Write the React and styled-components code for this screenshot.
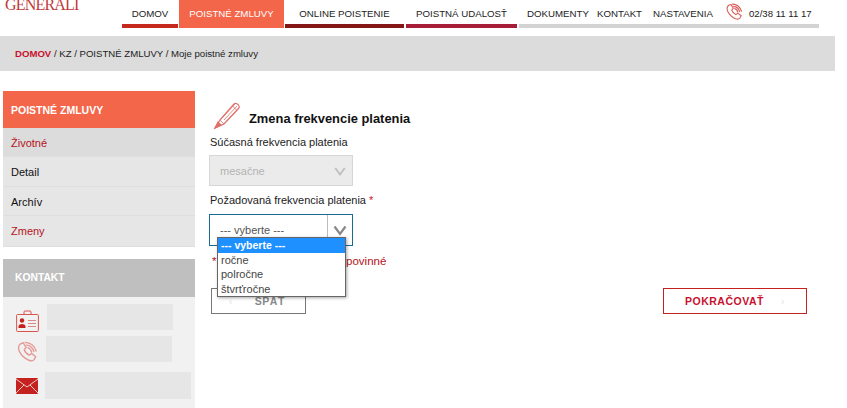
import React from 'react';
import styled, { createGlobalStyle } from 'styled-components';

const GlobalStyle = createGlobalStyle`
  html, body { margin: 0; padding: 0; background: #fff; overflow: hidden; }
  body { font-family: "Liberation Sans", Arial, sans-serif; font-size: 12px; color: #111; }
  * { box-sizing: border-box; }
`;

const Page = styled.div`
  width: 847px;
  height: 408px;
  overflow: hidden;
`;

// Header
const Header = styled.header`
  display: flex;
  height: 36px;
  padding-left: 5px;
`;

const Logo = styled.div`
  width: 117px;
  height: 12px;
  overflow: hidden;
  font-family: "Liberation Serif", serif;
  font-size: 16px;
  line-height: 10px;
  letter-spacing: -0.8px;
  color: #c0373a;
`;

const Nav = styled.nav`
  display: flex;
  align-items: flex-start;
  gap: 1px;
`;

const Tab = styled.a`
  display: block;
  width: ${p => p.$w}px;
  height: 28px;
  margin-right: ${p => p.$mr || 0}px;
  padding-top: 7px;
  text-align: center;
  font-size: 9.7px;
  line-height: 14px;
  white-space: nowrap;
  color: ${p => (p.$active ? '#fff' : '#222')};
  background: ${p => (p.$active ? '#f4664a' : 'transparent')};
  border-bottom: 4px solid ${p => p.$line};
`;

const TabGroup = styled.div`
  display: flex;
  align-items: flex-start;
  width: 300px;
  height: 28px;
  margin-left: 1px;
  padding: 7px 0 0 8px;
  border-bottom: 4px solid #d3d3d3;
`;

const GroupLink = styled.a`
  width: ${p => p.$w}px;
  font-size: 9.7px;
  line-height: 14px;
  white-space: nowrap;
  color: #222;
`;

const HeaderIcon = styled.span`
  display: flex;
  margin-top: -4px;
`;

const PhoneNumber = styled.span`
  margin-left: 6px;
  font-size: 9.6px;
  line-height: 14px;
  white-space: nowrap;
  color: #222;
`;

const Breadcrumb = styled.div`
  width: 835px;
  height: 35px;
  padding: 11px 0 0 15px;
  background: #dcdcdc;
  font-size: 9.6px;
  line-height: 13px;
  color: #222;

  b { color: #c8102e; font-weight: bold; }
`;

// Body
const Content = styled.div`
  display: flex;
  padding: 20px 0 0 3px;
`;

const Sidebar = styled.aside`
  width: 192px;
  flex-shrink: 0;
`;

const SideTitle = styled.div`
  height: 37px;
  padding: 12px 0 0 8px;
  background: #f4664a;
  color: #fff;
  font-size: 10.5px;
  line-height: 14px;
  font-weight: bold;
`;

const SideItem = styled.a`
  display: block;
  height: ${p => p.$h}px;
  padding: 8px 0 0 8px;
  font-size: 11px;
  line-height: 14px;
  color: ${p => (p.$red ? '#b5121b' : '#111')};
  background: ${p => (p.$current ? '#dcdcdc' : '#e6e6e6')};
  border-bottom: 1px solid #dedede;
`;

const ContactTitle = styled.div`
  height: 38px;
  margin-top: 12px;
  padding: 12px 0 0 12px;
  background: #bfbfbf;
  color: #fff;
  font-size: 10.3px;
  line-height: 14px;
  font-weight: bold;
`;

const ContactBody = styled.div`
  height: 120px;
  padding-top: 7px;
  background: #f1f1f1;
`;

const ContactRow = styled.div`
  display: flex;
  align-items: center;
  height: ${p => p.$h}px;
  margin-bottom: ${p => p.$mb}px;
  padding-left: ${p => p.$pl}px;
`;

// icons sit a little below the centre of their row
const ContactIcon = styled.span`
  display: flex;
  margin-top: ${p => p.$mt || 0}px;
`;

const ContactField = styled.div`
  width: ${p => p.$w}px;
  height: 100%;
  margin-left: ${p => p.$ml}px;
  background: #e6e6e6;
`;

const Main = styled.main`
  position: relative;
  flex: 1;
  padding: 5px 0 0 14px;
`;

const TitleRow = styled.div`
  display: flex;
  align-items: flex-end;
  height: 33px;
  padding-left: 4px;
`;

const Title = styled.h2`
  margin: 0 0 2px 8px;
  font-size: 12.9px;
  line-height: 16px;
  font-weight: bold;
  color: #111;
`;

const Label = styled.label`
  display: block;
  margin-top: ${p => p.$mt}px;
  padding-left: 1px;
  font-size: 11px;
  line-height: 14px;
  color: #222;

  i { color: #c8102e; font-style: normal; }
`;

const SelectBox = styled.div`
  position: relative;
  display: flex;
  align-items: center;
  width: 144px;
  height: ${p => (p.$open ? 32 : 31)}px;
  margin-top: ${p => p.$mt}px;
  padding-left: 10px;
  font-size: 11px;
  color: ${p => (p.$open ? '#555' : '#b3b3b3')};
  background: ${p => (p.$open ? '#fff' : '#ebebeb')};
  border: ${p => (p.$open ? '1.5px solid #1a6a94' : '1px solid #d6d6d6')};
`;

const Caret = styled.span`
  position: absolute;
  top: 0;
  right: 0;
  bottom: 0;
  width: 25px;
  display: flex;
  align-items: center;
  justify-content: center;
  border-left: ${p => (p.$open ? '1.5px solid #bcbcbc' : '0')};
`;

const Menu = styled.ul`
  position: absolute;
  top: 146px;
  left: 22px;
  z-index: 2;
  width: 129px;
  margin: 0;
  padding: 0;
  list-style: none;
  background: #fff;
  border: 1px solid #666;
  box-shadow: 1px 1px 3px rgba(0, 0, 0, 0.35);
`;

const MenuItem = styled.li`
  height: 14.5px;
  padding-left: 3px;
  font-size: ${p => (p.$selected ? 10.5 : 11)}px;
  line-height: 14.5px;
  font-weight: ${p => (p.$selected ? 'bold' : 'normal')};
  color: ${p => (p.$selected ? '#fff' : '#444')};
  background: ${p => (p.$selected ? '#1e90ff' : '#fff')};
`;

const Required = styled.p`
  margin: 8px 0 0 3px;
  font-size: 11.5px;
  line-height: 14px;
  color: #b5121b;
`;

const Buttons = styled.div`
  display: flex;
  justify-content: space-between;
  width: 596px;
  margin: 20px 0 0 2px;
`;

const Button = styled.a`
  display: flex;
  align-items: center;
  width: ${p => p.$w}px;
  height: 26px;
  padding-left: ${p => p.$pl}px;
  gap: ${p => p.$gap}px;
  font-size: 10.5px;
  font-weight: bold;
  letter-spacing: 0.5px;
  color: ${p => (p.$primary ? '#c8102e' : '#8a8a8a')};
  border: ${p => (p.$primary ? '1.5px solid #c5221f' : '1px solid #777')};
`;

const Chevron = styled.span`
  font-size: 10px;
  font-weight: normal;
  color: #e2e2e2;
`;

const Pencil = () => (
  <svg width="28" height="28" viewBox="0 0 28 28" fill="none" stroke="#e0706a" strokeWidth="1.2">
    <path d="M7 19 L21 3 Q23 1.5 25.5 4 Q27 6 25.5 7.5 L11 23 L2 27 Z" />
    <path d="M7 19 L11 23 M19.5 5 L23.5 9 M9 17 L22 3 M11 19 L24 5 M13 21 L26 7" strokeWidth="0.8" />
    <path d="M2 27 L5 21 L8 24 Z" fill="#e0706a" />
  </svg>
);

const PhoneWaves = ({ size, color }) => (
  <svg width={size} height={size} viewBox="0 0 24 24" fill="none" stroke={color} strokeWidth="1.5" strokeLinecap="round">
    <path d="M5 3 L8 2 L11 7 L9 9.5 Q10 13 14.5 15.5 L17 13.5 L21.5 17 L20 20 Q18 22.5 14 21 Q7 18 3.5 11 Q1.5 6 5 3 Z" />
    <path d="M10 1.5 Q19 2 22 11 M11.5 4.5 Q17.5 5 19.5 11.5 M13 7.5 Q16 8 17 12" />
  </svg>
);

const IdCard = () => (
  <svg width="23" height="22" viewBox="0 0 23 22" fill="none">
    <rect x="0.6" y="4.5" width="21.8" height="17" rx="1" stroke="#d9534f" strokeWidth="1" />
    <path d="M8 4.5 V2 Q8 1 9 1 H14 Q15 1 15 2 V4.5" stroke="#d9534f" strokeWidth="1" />
    <circle cx="6" cy="10.5" r="2.2" fill="#c5221f" />
    <path d="M2.5 18 V16 Q3 14 6 14 Q9 14 9.5 16 V18 Z" fill="#c5221f" />
    <path d="M12 10.5 H20 M12 13.5 H20 M12 16.5 H20" stroke="#d98a86" strokeWidth="1" />
  </svg>
);

const Envelope = () => (
  <svg width="22" height="16" viewBox="0 0 22 16">
    <rect width="22" height="16" rx="1" fill="#c5221f" />
    <path d="M0 1 L11 9 L22 1 M0 15 L8 7 M22 15 L14 7" stroke="#f1c9c7" strokeWidth="1" fill="none" />
  </svg>
);

const Chev = ({ size, color, width }) => (
  <svg width={size} height={size} viewBox="0 0 14 14" fill="none" stroke={color} strokeWidth={width}>
    <path d="M1.5 3.5 L7 11 L12.5 3.5" />
  </svg>
);

export default function App() {
  return (
    <Page>
      <GlobalStyle />
      <Header>
        <Logo>GENERALI</Logo>
        <Nav>
          <Tab $w={56} $line="#c5281c">DOMOV</Tab>
          <Tab $w={105} $line="#f4664a" $active>POISTNÉ ZMLUVY</Tab>
          <Tab $w={119} $line="#841716" $mr={1}>ONLINE POISTENIE</Tab>
          <Tab $w={111} $line="#a71c36">POISTNÁ UDALOSŤ</Tab>
          <TabGroup>
            <GroupLink $w={70}>DOKUMENTY</GroupLink>
            <GroupLink $w={56}>KONTAKT</GroupLink>
            <GroupLink $w={72}>NASTAVENIA</GroupLink>
            <HeaderIcon><PhoneWaves size={18} color="#d9605c" /></HeaderIcon>
            <PhoneNumber>02/38 11 11 17</PhoneNumber>
          </TabGroup>
        </Nav>
      </Header>
      <Breadcrumb><b>DOMOV</b> / KZ / POISTNÉ ZMLUVY / Moje poistné zmluvy</Breadcrumb>
      <Content>
        <Sidebar>
          <SideTitle>POISTNÉ ZMLUVY</SideTitle>
          <SideItem $h={29} $red $current>Životné</SideItem>
          <SideItem $h={30}>Detail</SideItem>
          <SideItem $h={29}>Archív</SideItem>
          <SideItem $h={31} $red>Zmeny</SideItem>
          <ContactTitle>KONTAKT</ContactTitle>
          <ContactBody>
            <ContactRow $h={26} $mb={6} $pl={13}>
              <ContactIcon $mt={8}><IdCard /></ContactIcon>
              <ContactField $w={126} $ml={8} />
            </ContactRow>
            <ContactRow $h={26} $mb={10} $pl={13}>
              <ContactIcon $mt={6}><PhoneWaves size={22} color="#e59a96" /></ContactIcon>
              <ContactField $w={126} $ml={8} />
            </ContactRow>
            <ContactRow $h={27} $mb={0} $pl={13}>
              <Envelope />
              <ContactField $w={146} $ml={7} />
            </ContactRow>
          </ContactBody>
        </Sidebar>
        <Main>
          <TitleRow>
            <Pencil />
            <Title>Zmena frekvencie platenia</Title>
          </TitleRow>
          <Label $mt={6}>Súčasná frekvencia platenia</Label>
          <SelectBox $mt={6}>
            mesačne
            <Caret><Chev size={12} color="#bdbdbd" width={2} /></Caret>
          </SelectBox>
          <Label $mt={7}>Požadovaná frekvencia platenia <i>*</i></Label>
          <SelectBox $mt={7} $open>
            --- vyberte ---
            <Caret $open><Chev size={14} color="#888" width={2.2} /></Caret>
          </SelectBox>
          <Menu>
            <MenuItem $selected>--- vyberte ---</MenuItem>
            <MenuItem>ročne</MenuItem>
            <MenuItem>polročne</MenuItem>
            <MenuItem>štvrťročne</MenuItem>
          </Menu>
          <Required>* Takto označené polia sú povinné</Required>
          <Buttons>
            <Button $w={95} $pl={17} $gap={22}><Chevron>‹</Chevron>SPÄŤ</Button>
            <Button $w={144} $pl={21} $gap={17} $primary>POKRAČOVAŤ<Chevron>›</Chevron></Button>
          </Buttons>
        </Main>
      </Content>
    </Page>
  );
}
